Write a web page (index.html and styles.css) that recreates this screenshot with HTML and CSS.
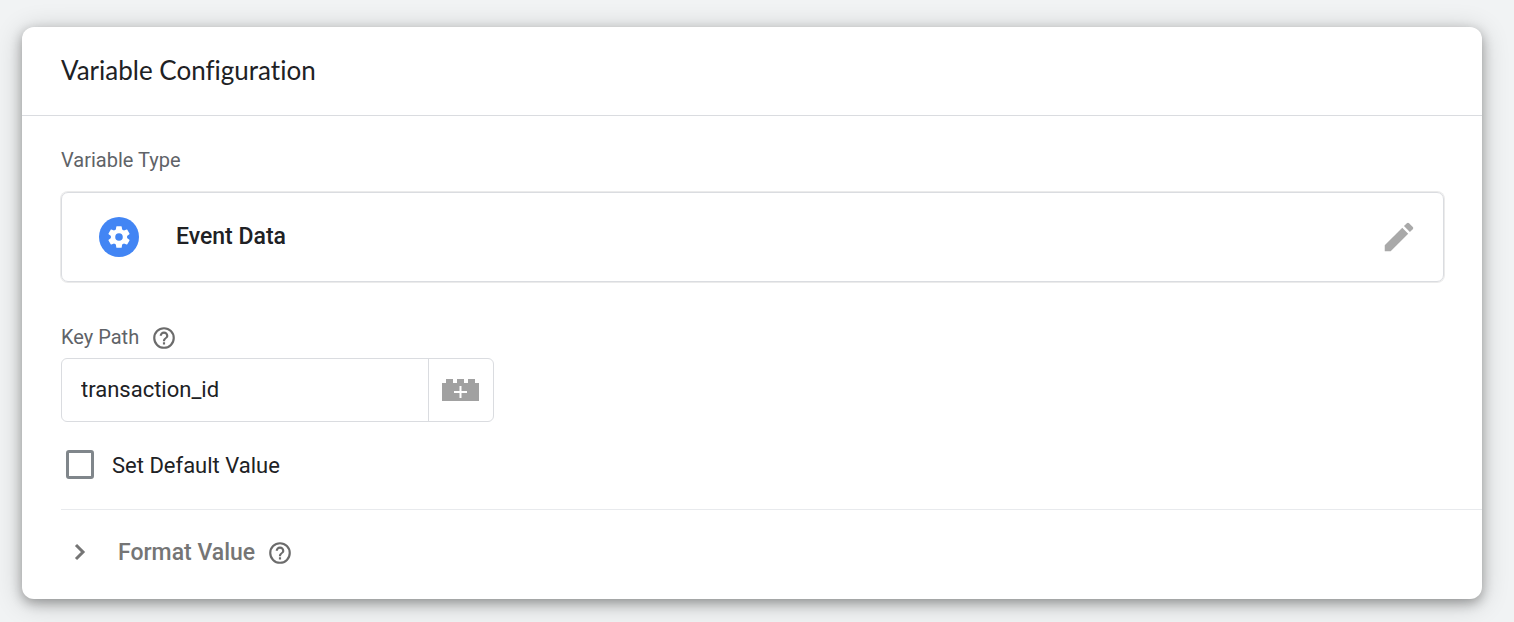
FILE: index.html
```html
<!DOCTYPE html>
<html lang="en">
<head>
<meta charset="utf-8">
<title>Variable Configuration</title>
<link rel="stylesheet" href="styles.css">
</head>
<body>
<main class="card">
  <header class="card-header">
    <h1 class="card-title">Variable Configuration</h1>
  </header>
  <section class="settings">
    <h2 class="label">Variable Type</h2>
    <div class="type-box">
      <span class="type-icon">
        <svg width="26" height="26" viewBox="0 0 24 24" fill="#fff" aria-hidden="true"><path d="M19.43 12.98c.04-.32.07-.64.07-.98s-.03-.66-.07-.98l2.11-1.65c.19-.15.24-.42.12-.64l-2-3.46c-.12-.22-.39-.3-.61-.22l-2.49 1c-.52-.4-1.08-.73-1.69-.98l-.38-2.65C14.46 2.18 14.25 2 14 2h-4c-.25 0-.46.18-.49.42l-.38 2.65c-.61.25-1.17.59-1.69.98l-2.49-1c-.23-.09-.49 0-.61.22l-2 3.46c-.13.22-.07.49.12.64l2.11 1.65c-.04.32-.07.65-.07.98s.03.66.07.98l-2.11 1.65c-.19.15-.24.42-.12.64l2 3.46c.12.22.39.3.61.22l2.49-1c.52.4 1.08.73 1.69.98l.38 2.65c.03.24.24.42.49.42h4c.25 0 .46-.18.49-.42l.38-2.65c.61-.25 1.17-.59 1.69-.98l2.49 1c.23.09.49 0 .61-.22l2-3.46c.12-.22.07-.49-.12-.64zM12 15.5a3.5 3.5 0 1 1 0-7 3.5 3.5 0 0 1 0 7z"/></svg>
      </span>
      <span class="type-name">Event Data</span>
      <button class="icon-button edit" type="button" aria-label="Edit variable type">
        <svg width="38" height="38" viewBox="0 0 24 24" fill="#a9a9a9" aria-hidden="true"><path d="M3 17.25V21h3.75L17.81 9.94l-3.75-3.75zM20.71 7.04a1 1 0 0 0 0-1.41l-2.34-2.34a1 1 0 0 0-1.41 0l-1.83 1.83 3.75 3.75z"/></svg>
      </button>
    </div>
    <div class="label-row">
      <label class="label" for="key-path">Key Path</label>
      <button class="icon-button" type="button" aria-label="Key Path help">
        <svg class="help" viewBox="0 0 24 24" aria-hidden="true"><path d="M11 18h2v-2h-2zm1-16a10 10 0 1 0 0 20 10 10 0 0 0 0-20zm0 18a8 8 0 1 1 0-16 8 8 0 0 1 0 16zm0-14a4 4 0 0 0-4 4h2a2 2 0 1 1 4 0c0 2-3 1.75-3 5h2c0-2.25 3-2.5 3-5a4 4 0 0 0-4-4z"/></svg>
      </button>
    </div>
    <div class="key-field">
      <input class="key-input" id="key-path" type="text" value="transaction_id">
      <button class="key-picker" type="button" aria-label="Choose a variable">
        <svg width="38" height="24" viewBox="0 0 38 24" aria-hidden="true"><path fill="#a1a1a1" d="M0 5h4V1h7v4h4V1h7v4h4V1h7v4h4v18H0z"/><path stroke="#fff" stroke-width="2" d="M12 14h13M18.500 8v12"/></svg>
      </button>
    </div>
    <label class="check-row">
      <input class="check" type="checkbox">
      <span>Set Default Value</span>
    </label>
  </section>
  <section class="format">
    <button class="format-toggle" type="button" aria-expanded="false">
      <svg class="chevron" width="36" height="32" viewBox="0 0 36 32" fill="none" stroke="#757575" stroke-width="3" aria-hidden="true"><path d="M15 8l7 7-7 7"/></svg>
      <span>Format Value</span>
    </button>
    <button class="icon-button" type="button" aria-label="Format Value help">
      <svg class="help" viewBox="0 0 24 24" aria-hidden="true"><path d="M11 18h2v-2h-2zm1-16a10 10 0 1 0 0 20 10 10 0 0 0 0-20zm0 18a8 8 0 1 1 0-16 8 8 0 0 1 0 16zm0-14a4 4 0 0 0-4 4h2a2 2 0 1 1 4 0c0 2-3 1.75-3 5h2c0-2.25 3-2.5 3-5a4 4 0 0 0-4-4z"/></svg>
    </button>
  </section>
</main>
</body>
</html>
```

FILE: styles.css
```css
* {
  box-sizing: border-box;
}

body {
  margin: 0;
  padding: 27px 32px 23px 22px;
  background: #f1f3f4;
  color: #202124;
  font-family: Roboto, sans-serif;
  font-size: 22px;
  line-height: 32px;
}

button,
input {
  margin: 0;
  font: inherit;
  color: inherit;
}

button {
  border: 0;
  padding: 0;
  background: none;
  cursor: pointer;
}

svg {
  display: block;
}

.card {
  border-radius: 12px;
  background: #fff;
  box-shadow: 0 4px 12px rgba(0, 0, 0, 0.3), 0 4px 28px rgba(0, 0, 0, 0.2);
}

.card-header {
  padding: 27px 39px 29px;
  border-bottom: 1px solid #dadce0;
}

.card-title {
  margin: 0;
  font-family: Lato, sans-serif;
  font-size: 26px;
  font-weight: 400;
  font-variant-ligatures: none;
  line-height: 32px;
}

.settings {
  padding: 32px 38px 27px 39px;
}

.label {
  margin: 0;
  color: #5f6368;
  font-size: 20px;
  font-weight: 400;
  line-height: 24px;
}

.type-box {
  display: flex;
  align-items: center;
  height: 90px;
  margin: 20px 0 43px;
  padding: 0 25px 0 37px;
  border: 1px solid #dadce0;
  border-radius: 7px;
  box-shadow: 0 0 0 1px #ebebeb;
}

.type-icon {
  display: grid;
  place-items: center;
  width: 40px;
  height: 40px;
  border-radius: 50%;
  background: #4285f4;
}

.type-name {
  margin-left: 37px;
  font-size: 23px;
  font-weight: 500;
}

.edit {
  margin-left: auto;
}

.label-row {
  display: flex;
  align-items: flex-start;
  gap: 12px;
}

.help {
  width: 26px;
  height: 26px;
  fill: #6b6b6b;
}

.key-field {
  display: flex;
  width: 433px;
  max-width: 100%;
  height: 64px;
  margin: 7px 0 28px;
  border: 1px solid #dadce0;
  border-radius: 6px;
}

.key-input {
  flex: 1;
  min-width: 0;
  padding: 0 19px;
  border: 0;
  background: none;
  outline: 0;
}

.key-picker {
  display: grid;
  place-items: center;
  width: 65px;
  border-left: 1px solid #dadce0;
}

.check-row {
  display: flex;
  align-items: flex-start;
  gap: 18px;
  padding-left: 5px;
}

.check {
  appearance: none;
  width: 28px;
  height: 29px;
  border: 3px solid #80868b;
  border-radius: 3px;
}

.format {
  display: flex;
  align-items: center;
  gap: 12px;
  margin-left: 39px;
  padding: 27px 0 30px;
  border-top: 1px solid #e8eaed;
  color: #757575;
}

.format-toggle {
  display: flex;
  align-items: center;
  gap: 21px;
  font-size: 23px;
  font-weight: 500;
}
```
